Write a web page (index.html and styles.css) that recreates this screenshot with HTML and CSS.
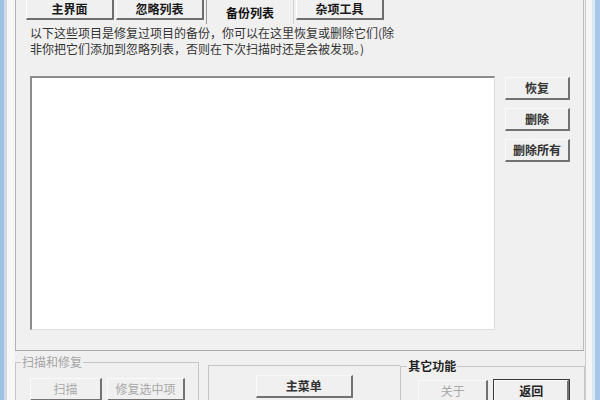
FILE: index.html
```html
<!DOCTYPE html>
<html lang="zh-CN">
<head>
<meta charset="utf-8">
<title>备份列表</title>
<link rel="stylesheet" href="styles.css">
</head>
<body>
<div class="window">
  <div class="frame-l"></div>
  <div class="client">
    <div class="panel">
      <div class="tabs">
        <div class="tab">主界面</div>
        <div class="tab">忽略列表</div>
        <div class="tab tab-active">备份列表</div>
        <div class="tab">杂项工具</div>
      </div>
      <div class="desc">
        <div class="desc-line">以下这些项目是修复过项目的备份，你可以在这里恢复或删除它们(除</div>
        <div class="desc-line">非你把它们添加到忽略列表，否则在下次扫描时还是会被发现。)</div>
      </div>
      <div class="list-row">
        <div class="listbox"></div>
        <div class="side-btns">
          <div class="btn side">恢复</div>
          <div class="btn side">删除</div>
          <div class="btn side">删除所有</div>
        </div>
      </div>
    </div>
    <div class="groups">
      <fieldset class="grp grp-scan">
        <legend class="lg-disabled">扫描和修复</legend>
        <div class="btn-row row-scan">
          <div class="btn disabled b-scan">扫描</div>
          <div class="btn disabled b-fix">修复选中项</div>
        </div>
      </fieldset>
      <fieldset class="grp grp-menu">
        <div class="btn b-menu">主菜单</div>
      </fieldset>
      <fieldset class="grp grp-other">
        <legend class="lg-other">其它功能</legend>
        <div class="btn-row row-other">
          <div class="btn disabled b-about">关于</div>
          <div class="default-wrap"><div class="btn b-back">返回</div></div>
        </div>
      </fieldset>
    </div>
  </div>
  <div class="frame-r"></div>
</div>
</body>
</html>
```
FILE: styles.css
```css
* { box-sizing: border-box; }
html, body {
  margin: 0;
  padding: 0;
  width: 600px;
  height: 400px;
  overflow: hidden;
  background: #f0f0f0;
  font-family: "Noto Sans CJK SC", "Liberation Sans", sans-serif;
  font-size: 12px;
  color: #222;
}
.window {
  display: flex;
  width: 600px;
  height: 400px;
  overflow: hidden;
}
.frame-l {
  width: 15px;
  flex: none;
  background: linear-gradient(to right, #9cc1e5 0 4px, #c8dcef 4px 5px, #d8d8d8 5px 7px, #f7f7f7 7px 15px);
}
.frame-r {
  width: 15px;
  flex: none;
  background: linear-gradient(to right, #cdcdcd 0 1px, #f5f5f5 1px 7px, #dde7f0 7px 10px, #a6c7e8 10px 15px);
}
.client {
  flex: 1;
  display: flex;
  flex-direction: column;
  width: 570px;
  height: 400px;
  overflow: hidden;
}
.panel {
  width: 569px;
  height: 351px;
  flex: none;
  border-left: 1px solid #b4b4b4;
  border-right: 1px solid #bcbcbc;
  border-bottom: 1px solid #a9a9a9;
  padding-left: 10px;
}
.tabs {
  display: flex;
  gap: 2px;
  height: 24px;
  align-items: flex-start;
}
.tab {
  width: 88px;
  height: 20px;
  display: flex;
  align-items: center;
  justify-content: center;
  font-weight: 700;
  color: #1a1a1a;
  line-height: 1;
  border-left: 1px solid #ffffff;
  border-right: 2px solid #6e6e6e;
  border-bottom: 2px solid #6e6e6e;
  padding-bottom: 1px;
}
.tab-active {
  height: 24px;
  border-left: 1px solid #9a9a9a;
  border-right: 1px solid #d2d2d2;
  border-bottom: none;
  padding-top: 3px;
  color: #111;
}
.desc {
  margin: 1px 0 0 4px;
  color: #333;
  white-space: nowrap;
}
.desc-line {
  height: 16px;
  line-height: 16px;
}
.list-row {
  display: flex;
  margin: 19px 0 0 4px;
  align-items: flex-start;
}
.listbox {
  width: 465px;
  height: 254px;
  background: #fff;
  border-top: 2px solid #8c8c8c;
  border-left: 2px solid #8c8c8c;
  border-right: 1px solid #dedede;
  border-bottom: 1px solid #dedede;
}
.side-btns {
  display: flex;
  flex-direction: column;
  gap: 8px;
  margin: 1px 0 0 10px;
}
.btn {
  height: 23px;
  display: flex;
  align-items: center;
  justify-content: center;
  font-weight: 700;
  color: #333;
  line-height: 1;
  background: #f0f0f0;
  border-top: 1px solid #fafafa;
  border-left: 1px solid #fafafa;
  border-right: 2px solid #727272;
  border-bottom: 2px solid #727272;
}
.btn.side { width: 65px; }
.btn.disabled {
  color: #a8a8a8;
  font-weight: 400;
}
.groups {
  display: flex;
  align-items: flex-start;
  height: 49px;
  flex: none;
  overflow: hidden;
}
.grp {
  margin: 0;
  padding: 0;
  min-width: 0;
  border: 1px solid #c6c6c6;
  height: 60px;
}
.grp legend {
  padding: 0 1px;
  line-height: 16px;
  font-size: 12px;
}
.lg-disabled {
  margin-left: 5px;
  color: #a4a4a4;
}
.lg-other {
  margin-left: 6px;
  font-weight: 700;
  color: #222;
}
.btn-row {
  display: flex;
  gap: 5px;
}
.grp-scan {
  width: 184px;
  margin-top: 3px;
  padding-top: 8px;
}
.row-scan { margin-left: 14px; }
.b-scan { width: 72px; }
.b-fix { width: 78px; }
.grp-menu {
  width: 193px;
  margin: 14px 0 0 9px;
  border-right: none;
  padding: 9px 0 0 47px;
}
.b-menu { width: 97px; }
.grp-other {
  width: 185px;
  margin-top: 7px;
  padding-top: 6px;
}
.row-other { margin-left: 17px; }
.b-about { width: 70px; }
.default-wrap {
  border: 1px solid #3a3a3a;
  width: 77px;
  height: 24px;
  margin-top: -1px;
}
.b-back {
  width: 75px;
  height: 22px;
  color: #222;
}
```
